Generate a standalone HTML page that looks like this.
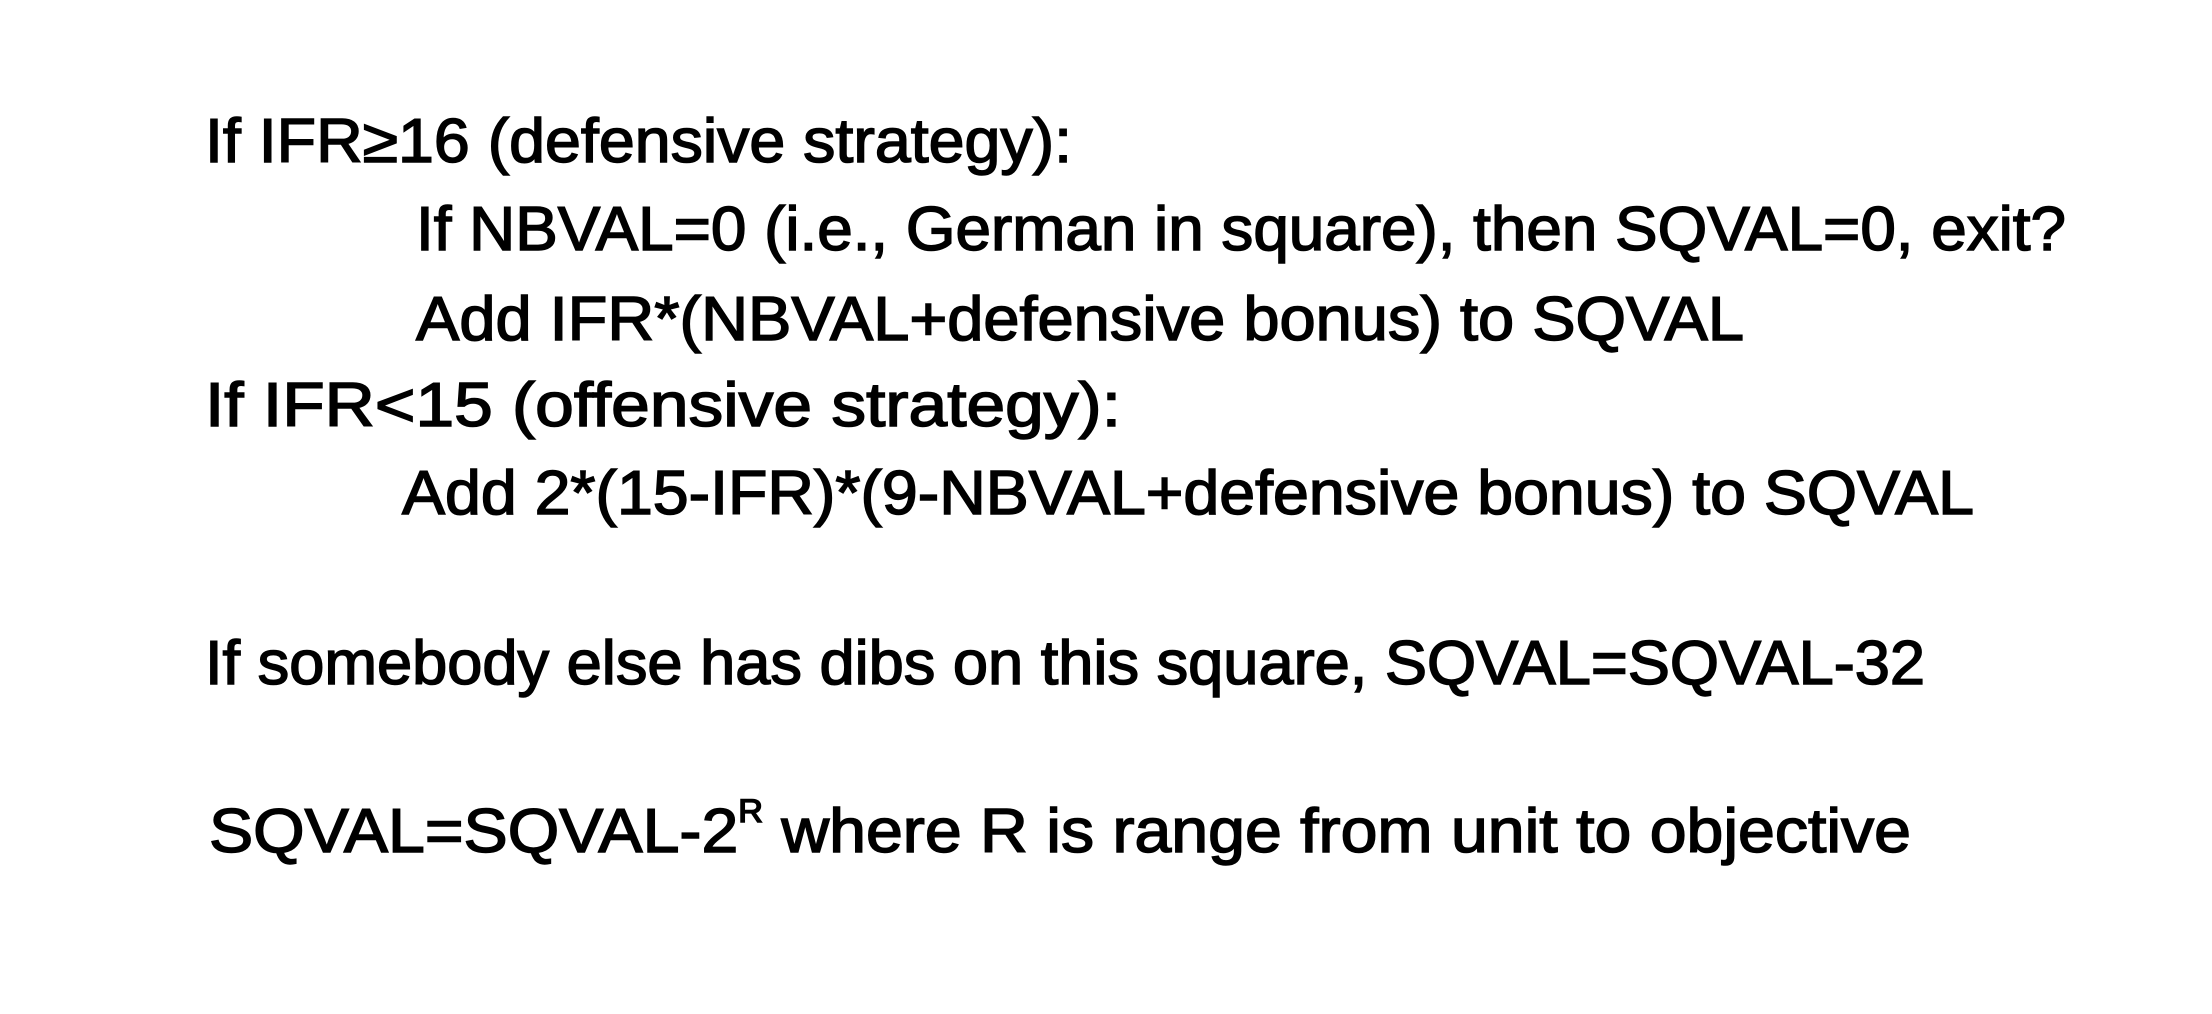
<!DOCTYPE html>
<html><head><meta charset="utf-8"><style>
html,body{margin:0;padding:0;background:#fff;width:2212px;height:1014px;overflow:hidden}
svg text{font-family:"Liberation Sans",sans-serif;font-size:62px;fill:#000;stroke:#000;stroke-width:1.5px}
</style></head><body>
<svg width="2212" height="1014" xmlns="http://www.w3.org/2000/svg">
<text x="205" y="162" textLength="867" lengthAdjust="spacingAndGlyphs">If IFR≥16 (defensive strategy):</text>
<text x="416" y="250" textLength="1650" lengthAdjust="spacingAndGlyphs">If NBVAL=0 (i.e., German in square), then SQVAL=0, exit?</text>
<text x="416" y="340" textLength="1328" lengthAdjust="spacingAndGlyphs">Add IFR*(NBVAL+defensive bonus) to SQVAL</text>
<text x="205" y="426" textLength="916" lengthAdjust="spacingAndGlyphs">If IFR&lt;15 (offensive strategy):</text>
<text x="402" y="514" textLength="1572" lengthAdjust="spacingAndGlyphs">Add 2*(15-IFR)*(9-NBVAL+defensive bonus) to SQVAL</text>
<text x="205" y="684" textLength="1720" lengthAdjust="spacingAndGlyphs">If somebody else has dibs on this square, SQVAL=SQVAL-32</text>
<text x="209" y="852" textLength="1702" lengthAdjust="spacingAndGlyphs">SQVAL=SQVAL-2<tspan dy="-30" font-size="32">R</tspan><tspan dy="30"> where R is range from unit to objective</tspan></text>
</svg>
</body></html>
